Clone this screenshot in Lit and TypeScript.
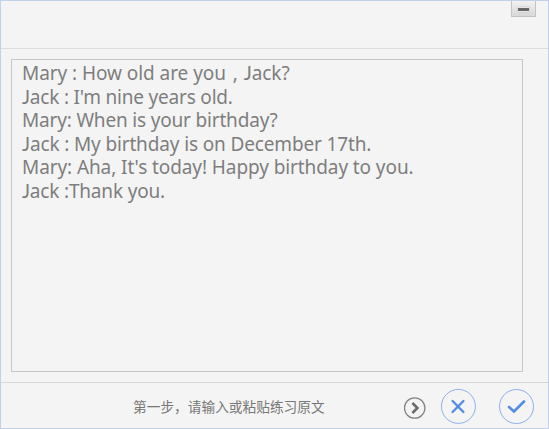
import { LitElement, html, css } from "lit";
import { customElement } from "lit/decorators.js";

interface Line { text: string; spacing: number; }

const LINES: Line[] = [
  { text: "Mary : How old are you , Jack?", spacing: -0.06 },
  { text: "Jack : I'm nine years old.", spacing: -0.2 },
  { text: "Mary: When is your birthday?", spacing: -0.18 },
  { text: "Jack : My birthday is on December 17th.", spacing: -0.14 },
  { text: "Mary: Aha, It's today! Happy birthday to you.", spacing: -0.09 },
  { text: "Jack :Thank you.", spacing: -0.18 },
];

@customElement("app-root")
export class AppRoot extends LitElement {
  static styles = css`
    :host {
      display: flex;
      flex-direction: column;
      box-sizing: border-box;
      width: 549px;
      height: 429px;
      border: 1px solid #c1d1ea;
      background: #f4f4f4;
      overflow: hidden;
    }
    header {
      box-sizing: border-box;
      display: flex;
      justify-content: flex-end;
      align-items: flex-start;
      height: 48px;
      padding-right: 12px;
      border-bottom: 1px solid #dcdddf;
      flex: none;
    }
    .minimize {
      box-sizing: border-box;
      width: 25px;
      height: 17px;
      margin-top: -1px;
      border: 1px solid #c3c3c3;
      border-top: none;
      background: linear-gradient(#f3f3f3, #d8d8d8);
      display: flex;
      justify-content: center;
    }
    .minimize svg { display: block; }
    main {
      flex: 1;
      padding: 10px 25px 10px 10px;
      display: flex;
      min-height: 0;
    }
    .editor {
      flex: 1;
      box-sizing: border-box;
      border: 1px solid #c8c8c8;
      padding: 2px 0 0 10px;
      color: #7e7e7e;
      font: 19px/23.6px "Noto Sans", "Noto Sans CJK SC", sans-serif;
    }
    .line { height: 23.6px; white-space: pre; }
    .cap { font-family: Lato, sans-serif; line-height: 1; }
    .comma { margin: 0 1px 0 2px; }
    footer {
      box-sizing: border-box;
      height: 46px;
      flex: none;
      border-top: 1px solid #d6d6d6;
      display: flex;
      align-items: center;
      padding: 1px 14px 0 132px;
    }
    .hint {
      flex: 1;
      color: #777;
      font: 13.7px/20px "Noto Sans CJK SC", sans-serif;
      white-space: nowrap;
      padding-bottom: 1px;
    }
    footer svg { display: block; flex: none; }
    .next { margin: 3px 14px 0 0; }
    .cancel { margin-right: 22px; }
  `;

  private piece(part: string) {
    if (part === "J") return html`<span class="cap">J</span>`;
    if (part === " ,") return html` <span class="comma">,</span>`;
    return part;
  }

  render() {
    return html`
      <header>
        <div class="minimize">
          <svg width="13" height="16" viewBox="0 0 13 16">
            <rect x=".3" y="7" width="12.4" height="5" rx="1" fill="#fafafa" stroke="#bdbdbd" stroke-width=".6"/>
            <rect x="1" y="8" width="11" height="3" fill="#686868"/>
          </svg>
        </div>
      </header>
      <main>
        <div class="editor">
          ${LINES.map((l) => html`<div class="line" style="letter-spacing:${l.spacing}px">${l.text
            .split(/(J| ,)/)
            .map((part) => this.piece(part))}</div>`)}
        </div>
      </main>
      <footer>
        <span class="hint">第一步，请输入或粘贴练习原文</span>
        <svg class="next" width="22" height="22" viewBox="0 0 22 22" fill="none">
          <circle cx="10.7" cy="11" r="10.2" stroke="#858585" stroke-width="1.3"/>
          <path d="M8.4 6 13.4 11 8.4 16" stroke="#6b6b6b" stroke-width="2.6"/>
        </svg>
        <svg class="cancel" width="36" height="36" viewBox="0 0 36 36" fill="none">
          <circle cx="18.4" cy="18.4" r="17" stroke="#8db0ec"/>
          <path d="M12.6 13 23.4 24M23.4 13 12.6 24" stroke="#548ce5" stroke-width="2.4" stroke-linecap="round"/>
        </svg>
        <svg width="36" height="36" viewBox="0 0 36 36" fill="none">
          <circle cx="18.5" cy="18.5" r="17" stroke="#8db0ec"/>
          <path d="M11 19 16 23.5 26 13.5" stroke="#548ce5" stroke-width="2.6" stroke-linecap="round"/>
        </svg>
      </footer>
    `;
  }
}
